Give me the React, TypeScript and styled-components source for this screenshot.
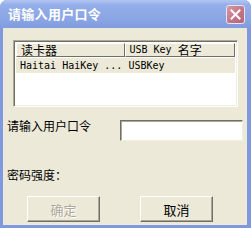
import styled, { createGlobalStyle } from 'styled-components';

/* ── Global ── */

const GlobalStyle = createGlobalStyle`
    html, body {
        margin: 0;
        padding: 0;
        background: #ffffff;
    }
    * { box-sizing: border-box; }
`;

const CJK = `"Noto Sans CJK SC", "Noto Sans", sans-serif`;
const MONO = `"DejaVu Sans Mono", "Noto Sans CJK SC", monospace`;

/* ── Window frame ── */

const Window = styled.div`
    width: 251px;
    height: 228px;
    display: flex;
    flex-direction: column;
    background: #7f98df;
    border-radius: 7px 7px 0 0;
    overflow: hidden;
    font-family: ${CJK};
    color: #000;
`;

const TitleBar = styled.div`
    height: 28px;
    flex-shrink: 0;
    display: flex;
    align-items: center;
    justify-content: space-between;
    padding: 0 6px 0 8px;
    background: linear-gradient(to bottom, #b3c6f3 0%, #94aeea 18%, #8aa5e4 70%, #819cdf 100%);
`;

const Title = styled.span`
    font-size: 13px;
    font-weight: 700;
    color: #ffffff;
    line-height: 14px;
    letter-spacing: 0.3px;
`;

const CloseBtn = styled.div`
    width: 19px;
    height: 19px;
    border-radius: 3px;
    border: 1px solid #e9e4f3;
    background: linear-gradient(135deg, #d69aa6 0%, #c27586 55%, #b36678 100%);
    display: flex;
    align-items: center;
    justify-content: center;
`;

const Client = styled.div`
    flex: 1;
    margin: 0 4px 3px 3px;
    background: #ece9d8;
    display: flex;
    flex-direction: column;
    padding: 12px 4px 0 4px;
`;

/* ── List view ── */

const ListView = styled.div`
    margin-left: 6px;
    width: 225px;
    height: 67px;
    background: #ffffff;
    border-top: 1px solid #aca899;
    border-left: 1px solid #aca899;
    border-right: 1px solid #ffffff;
    border-bottom: 1px solid #ffffff;
    box-shadow: inset 1px 1px 0 #716f64, inset -1px -1px 0 #f1efe2;
    padding: 2px;
`;

const HeaderRow = styled.div`
    display: flex;
    height: 14px;
`;

const HeaderCell = styled.div<{ $w: number }>`
    width: ${p => p.$w}px;
    height: 14px;
    background: #ece9d8;
    border-top: 1px solid #ffffff;
    border-left: 1px solid #ffffff;
    border-right: 1px solid #716f64;
    border-bottom: 1px solid #716f64;
    padding-left: 4px;
    font-size: 12px;
    line-height: 12px;
    white-space: nowrap;
    display: flex;
    align-items: center;
`;

const Mono = styled.span`
    font-family: ${MONO};
    font-size: 10px;
`;

const Row = styled.div`
    display: flex;
    height: 15px;
    background: #ece9d8;
    margin-top: 1px;
`;

const Cell = styled.div<{ $w: number }>`
    width: ${p => p.$w}px;
    padding-left: 4px;
    font-family: ${MONO};
    font-size: 10px;
    line-height: 15px;
    white-space: nowrap;
`;

/* ── Form ── */

const Label = styled.div`
    font-size: 12px;
    line-height: 14px;
`;

const FieldRow = styled.div`
    display: flex;
    align-items: flex-start;
    justify-content: space-between;
    margin-top: 12px;
`;

const Input = styled.div`
    width: 123px;
    height: 21px;
    background: #ffffff;
    border-top: 1px solid #716f64;
    border-left: 1px solid #716f64;
    border-right: 1px solid #f1efe2;
    border-bottom: 1px solid #f1efe2;
    box-shadow: inset 1px 1px 0 #aca899;
    margin-top: 1px;
`;

const Strength = styled(Label)`
    margin-top: 27px;
`;

const Buttons = styled.div`
    display: flex;
    gap: 40px;
    margin: 14px 0 0 20px;
`;

const Button = styled.div<{ $disabled?: boolean }>`
    width: 73px;
    height: 26px;
    background: #ece9d8;
    border-top: 1px solid #ffffff;
    border-left: 1px solid #ffffff;
    border-right: 1px solid #716f64;
    border-bottom: 1px solid #716f64;
    box-shadow: inset -1px -1px 0 #aca899;
    display: flex;
    align-items: center;
    justify-content: center;
    font-size: 13px;
    color: ${p => (p.$disabled ? '#aca899' : '#000000')};
    text-shadow: ${p => (p.$disabled ? '1px 1px 0 #ffffff' : 'none')};
`;

/* ── Component ── */

export default function App() {
    return (
        <>
            <GlobalStyle />
            <Window>
                <TitleBar>
                    <Title>请输入用户口令</Title>
                    <CloseBtn>
                        <svg width="11" height="11" viewBox="0 0 11 11">
                            <path d="M1.5 1.5 L9.5 9.5 M9.5 1.5 L1.5 9.5" stroke="#ffffff" strokeWidth="2" strokeLinecap="square" />
                        </svg>
                    </CloseBtn>
                </TitleBar>
                <Client>
                    <ListView>
                        <HeaderRow>
                            <HeaderCell $w={109}>读卡器</HeaderCell>
                            <HeaderCell $w={111}>
                                <Mono>USB Key&nbsp;</Mono>名字
                            </HeaderCell>
                        </HeaderRow>
                        <Row>
                            <Cell $w={109}>Haitai HaiKey ...</Cell>
                            <Cell $w={111}>USBKey</Cell>
                        </Row>
                    </ListView>
                    <FieldRow>
                        <Label>请输入用户口令</Label>
                        <Input />
                    </FieldRow>
                    <Strength>密码强度：</Strength>
                    <Buttons>
                        <Button $disabled>确定</Button>
                        <Button>取消</Button>
                    </Buttons>
                </Client>
            </Window>
        </>
    );
}
